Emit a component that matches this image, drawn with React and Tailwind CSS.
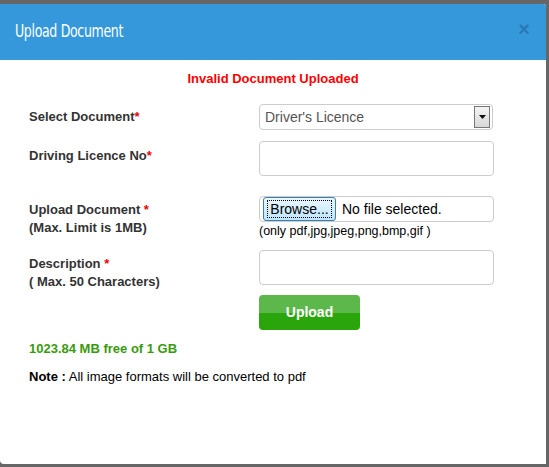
export default function App() {
  const label = "text-[13px] font-bold text-[#333] leading-[18px]";
  return (
    <div className="w-[549px] h-[467px] bg-[#666] pt-[4px] pr-[3px] pb-[3px] overflow-hidden" style={{ fontFamily: '"Liberation Sans", Arial, sans-serif' }}>
      <div className="h-full bg-white rounded-tr-[3px] rounded-bl-[4px] overflow-hidden">
        {/* header */}
        <div className="h-[56px] bg-[#3498db] flex items-center justify-between pl-[15px] pr-[16px]">
          <h3 className="text-white text-[17px] tracking-[-0.4px] origin-left scale-x-[0.82]" style={{ fontFamily: '"Liberation Sans Narrow", "DejaVu Sans Condensed", "Liberation Sans", sans-serif' }}>
            Upload Document
          </h3>
          <button className="text-[#2a78b5] text-[20px] font-bold leading-none pb-[7px]">×</button>
        </div>

        <div className="pt-[11px]">
          <p className="text-center text-[13px] font-bold text-[#ff0000] leading-[15px]">Invalid Document Uploaded</p>

          <div className="pl-[29px] mt-[18px]">
            {/* select document */}
            <div className="flex items-center">
              <div className={`${label} w-[230px]`}>
                Select Document<span className="text-[#e00]">*</span>
              </div>
              <div className="w-[234px] h-[26px] border border-[#ccc] rounded-[4px] flex items-center justify-between pl-[5px] pr-[2px]">
                <span className="text-[14px] text-[#555]">Driver's Licence</span>
                <div className="w-[16px] h-[22px] border border-[#777] bg-gradient-to-b from-[#f4f4f4] to-[#d8d8d8] flex items-center justify-center">
                  <svg width="7" height="4" viewBox="0 0 7 4"><path d="M0 0h7L3.5 4z" fill="#111" /></svg>
                </div>
              </div>
            </div>

            {/* licence number */}
            <div className="flex items-start mt-[11px]">
              <div className={`${label} w-[230px] pt-[6px]`}>
                Driving Licence No<span className="text-[#e00]">*</span>
              </div>
              <div className="w-[235px] h-[35px] border border-[#ccc] rounded-[4px]" />
            </div>

            {/* file upload */}
            <div className="flex items-start mt-[20px]">
              <div className={`${label} w-[230px] pt-[5px]`}>
                <div>Upload Document <span className="text-[#e00]">*</span></div>
                <div>(Max. Limit is 1MB)</div>
              </div>
              <div className="w-[235px]">
                <div className="h-[26px] border border-[#ccc] rounded-[4px] flex items-center pl-[3px]">
                  <div className="h-[24px] w-[73px] border border-[#3c7fb1] rounded-[3px] bg-gradient-to-b from-[#eaf6fd] to-[#bee6fd] flex items-center justify-center">
                    <span className="text-[14px] text-black px-[2px] border border-dotted border-black leading-[16px]">Browse...</span>
                  </div>
                  <span className="text-[14px] text-black ml-[6px]">No file selected.</span>
                </div>
                <div className="text-[12.5px] text-black leading-[16px] mt-[1px]">(only pdf,jpg,jpeg,png,bmp,gif )</div>
              </div>
            </div>

            {/* description */}
            <div className="flex items-start mt-[11px]">
              <div className={`${label} w-[230px] pt-[5px]`}>
                <div>Description <span className="text-[#e00]">*</span></div>
                <div>( Max. 50 Characters)</div>
              </div>
              <div className="w-[235px] h-[35px] border border-[#ccc] rounded-[4px]" />
            </div>

            <div className="flex mt-[4px]">
              <div className="w-[230px]" />
              <button className="w-[101px] h-[35px] rounded-[4px] overflow-hidden flex flex-col relative">
                <div className="h-1/2 w-full bg-[#5cb84a]" />
                <div className="h-1/2 w-full bg-[#2aa50b]" />
                <span className="absolute inset-0 flex items-center justify-center text-white font-bold text-[14px]">Upload</span>
              </button>
            </div>

            <p className="text-[13px] font-bold text-[#3a9a0e] mt-[11px] leading-[16px]">1023.84 MB free of 1 GB</p>
            <p className="text-[13px] text-black mt-[12px] leading-[16px]">
              <span className="font-bold">Note :</span> All image formats will be converted to pdf
            </p>
          </div>
        </div>
      </div>
    </div>
  );
}
